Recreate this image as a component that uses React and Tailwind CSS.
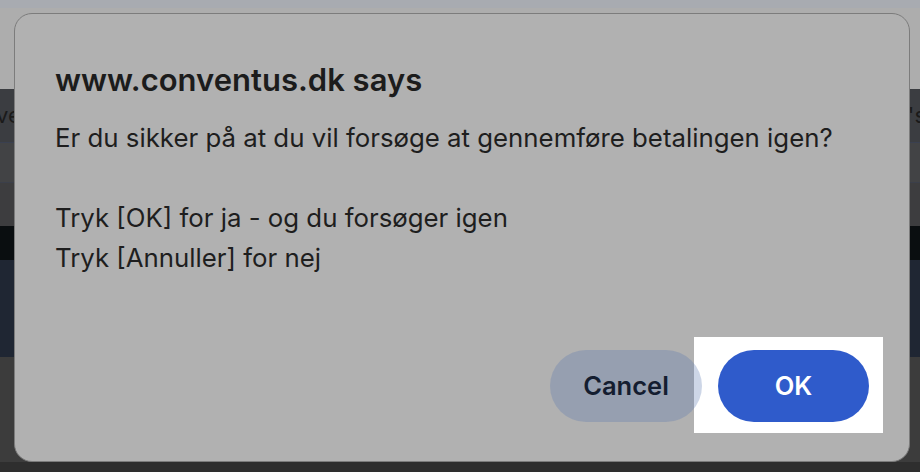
const font = { fontFamily: "Inter, 'Noto Sans', sans-serif" };

const App = () => {
  return (
    <div
      className="relative w-[920px] h-[472px] overflow-hidden bg-[#343434]"
      style={font}
    >
      {/* dimmed page behind the dialog */}
      <div className="flex flex-col h-full">
        <div className="h-[8px] bg-[#a8abb1]" />
        <div className="h-[81px] bg-[#adadad]" />
        <div className="h-[54px] bg-[#3b3d41] flex items-center justify-between border-b border-[#3a4050]">
          <span className="text-[22px] text-[#1a1a1a] -ml-[4px]">ve</span>
          <span className="text-[22px] text-[#1a1a1a] -mr-[6px]">'s</span>
        </div>
        <div className="h-[40px] bg-[#424345] border-b border-[#3b3f4a]" />
        <div className="h-[43px] bg-[#3d3d3f]" />
        <div className="h-[34px] bg-[#0a0e10]" />
        <div className="h-[97px] bg-[#1f2633]" />
        <div className="h-[105px] bg-[#3c3c3c]" />
        <div className="flex-1 bg-[#2e2e2e]" />
      </div>

      {/* alert dialog */}
      <div className="absolute left-[14px] top-[13px] w-[896px] h-[449px] rounded-[18px] border border-[#7c7c7c] bg-[#b1b1b1] flex flex-col pl-[40px] pr-[40px] pt-[48px] pb-[39px]">
        <h1 className="text-[31px] leading-[36px] font-semibold text-[#1c1c1c]">
          www.conventus.dk says
        </h1>
        <div className="mt-[20px] text-[25.8px] leading-[40px] text-[#1e1e1e]">
          <p>Er du sikker på at du vil forsøge at gennemføre betalingen igen?</p>
          <p>&nbsp;</p>
          <p>Tryk [OK] for ja - og du forsøger igen</p>
          <p>Tryk [Annuller] for nej</p>
        </div>
        <div className="mt-auto flex justify-end gap-[16px]">
          <button className="relative z-10 w-[152px] h-[72px] rounded-full bg-[rgba(90,120,177,0.3)] text-[25.5px] font-semibold text-[#141d30]">
            Cancel
          </button>
          <div className="relative">
            <div className="absolute -left-[24px] -right-[14px] -top-[13px] -bottom-[11px] bg-white" />
            <button className="relative w-[151px] h-[72px] rounded-full bg-[#2f5bcb] text-[25.5px] font-semibold text-white">
              OK
            </button>
          </div>
        </div>
      </div>
    </div>
  );
};

export default App;
